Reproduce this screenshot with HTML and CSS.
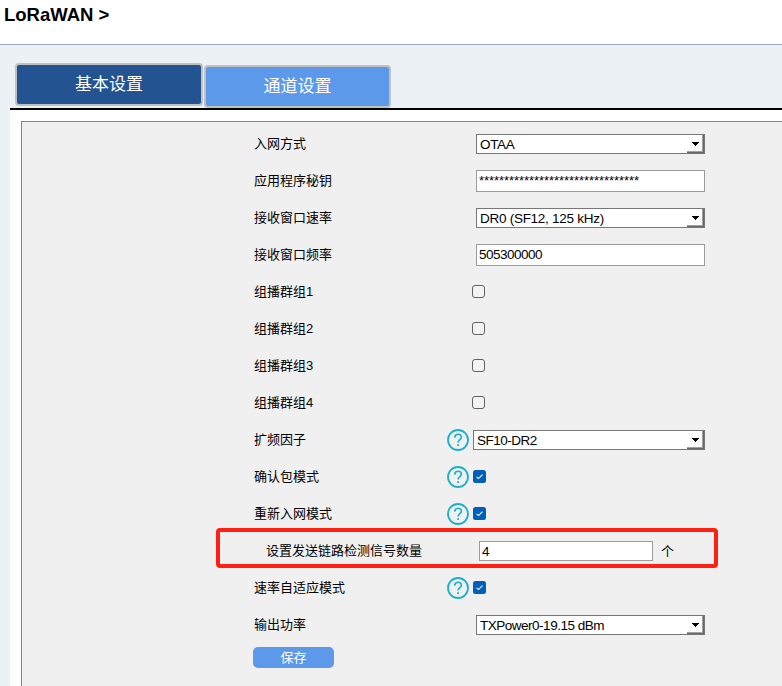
FILE: index.html
```html
<!DOCTYPE html>
<html lang="zh-CN">
<head>
<meta charset="utf-8">
<title>LoRaWAN</title>
<link rel="stylesheet" href="styles.css">
</head>
<body>
<svg class="defs" width="0" height="0">
  <symbol id="help" viewBox="0 0 22 22"><circle cx="11" cy="11" r="10" fill="none" stroke="#1db0cb" stroke-width="1.8"/><path d="M7.7 8.6C7.8 6.4 9.1 5.3 11.1 5.3S14.4 6.5 14.4 8.3C14.4 10.5 11.1 10.8 11.1 13.6" fill="none" stroke="#1db0cb" stroke-width="1.6"/><path d="M10.2 15.2h1.8v1.8h-1.8z" fill="#1db0cb"/></symbol>
  <symbol id="check" viewBox="0 0 13 13"><rect width="13" height="13" rx="2.5" fill="#005fb8"/><path d="M3.6 6.9l1.9 1.7 4-4" fill="none" stroke="#fff" stroke-width="1.1"/></symbol>
  <symbol id="arrow" viewBox="0 0 7 4"><path d="M0 0h7v1H6v1H5v1H4v1H3V3H2V2H1V1H0z" shape-rendering="crispEdges"/></symbol>
</svg>
<header class="header"><h1>LoRaWAN &gt;</h1></header>
<main class="page">
  <nav class="tabs">
    <a class="tab active">基本设置</a>
    <a class="tab">通道设置</a>
  </nav>
  <div class="content">
    <form class="panel">
      <div class="row"><label>入网方式</label><div class="field"><div class="select"><span>OTAA</span><i><svg><use href="#arrow"/></svg></i></div></div></div>
      <div class="row"><label>应用程序秘钥</label><div class="field"><input class="text stars" type="text" value="********************************"></div></div>
      <div class="row"><label>接收窗口速率</label><div class="field"><div class="select"><span class="rate">DR0 (SF12, 125 kHz)</span><i><svg><use href="#arrow"/></svg></i></div></div></div>
      <div class="row"><label>接收窗口频率</label><div class="field"><input class="text" type="text" value="505300000"></div></div>
      <div class="row"><label>组播群组1</label><div class="field"><input class="box" type="checkbox"></div></div>
      <div class="row"><label>组播群组2</label><div class="field"><input class="box" type="checkbox"></div></div>
      <div class="row"><label>组播群组3</label><div class="field"><input class="box" type="checkbox"></div></div>
      <div class="row"><label>组播群组4</label><div class="field"><input class="box" type="checkbox"></div></div>
      <div class="row"><label>扩频因子</label><div class="field helped"><svg class="help"><use href="#help"/></svg><div class="select"><span class="factor">SF10-DR2</span><i><svg><use href="#arrow"/></svg></i></div></div></div>
      <div class="row"><label>确认包模式</label><div class="field helped"><svg class="help"><use href="#help"/></svg><svg class="checked"><use href="#check"/></svg></div></div>
      <div class="row"><label>重新入网模式</label><div class="field helped"><svg class="help"><use href="#help"/></svg><svg class="checked"><use href="#check"/></svg></div></div>
      <div class="row highlight"><label>设置发送链路检测信号数量</label><div class="field"><input class="text" type="text" value="4"><span class="unit">个</span></div></div>
      <div class="row"><label>速率自适应模式</label><div class="field helped"><svg class="help"><use href="#help"/></svg><svg class="checked"><use href="#check"/></svg></div></div>
      <div class="row"><label>输出功率</label><div class="field"><div class="select"><span class="power">TXPower0-19.15 dBm</span><i><svg><use href="#arrow"/></svg></i></div></div></div>
      <button class="save" type="button">保存</button>
    </form>
  </div>
</main>
</body>
</html>
```
FILE: styles.css
```css
* { box-sizing: border-box; }
body {
  margin: 0;
  height: 686px;
  overflow: hidden;
  display: flex;
  flex-direction: column;
  background: #fff;
  color: #000;
  font: 13px "Liberation Sans", "Noto Sans CJK SC", sans-serif;
}
.defs { position: absolute; }
.header {
  flex: none;
  height: 45px;
  padding: 4px 4px 0;
  border-bottom: 1px solid #9aa9c4;
}
h1 { margin: 0; font-size: 18.5px; line-height: 22px; font-weight: bold; }
.page {
  flex: 1;
  display: flex;
  flex-direction: column;
  padding-left: 10px;
  background: #ecf1f6;
}
.tabs {
  display: flex;
  flex: none;
  gap: 1px;
  height: 65px;
  padding: 18px 0 0 5px;
  border-bottom: 2px solid #000;
}
.tab {
  width: 188px;
  height: 43px;
  margin-top: 2px;
  border: 2px solid #c0c0c0;
  border-radius: 4px;
  background: #5c99ea;
  color: #fff;
  font-size: 17px;
  line-height: 40px;
  text-align: center;
}
.tab.active { margin-top: 0; background: #235391; }
.tab + .tab { width: 187px; }
.content { flex: 1; padding: 11px 0 0 11px; background: #fff; }
.panel {
  height: 100%;
  padding-top: 4px;
  border: solid #83838b;
  border-width: 1px 0 0 1px;
  background: #f0f0f0;
}
.row { display: flex; align-items: center; height: 37px; padding-left: 232px; }
.row label { flex: none; width: 222px; margin-bottom: 1px; line-height: 20px; }
.field { display: flex; align-items: center; width: 229px; height: 100%; }
.helped { width: 258px; margin-left: -29px; gap: 4px; }
.text {
  width: 229px;
  height: 22px;
  margin-bottom: 2px;
  padding: 0 2px;
  border: 1px solid #9b9b9b;
  border-radius: 0;
  background: #fff;
  color: #000;
  font: inherit;
  font-size: 13.5px;
  letter-spacing: -0.5px;
}
.stars { padding-bottom: 1px; font-size: 13px; letter-spacing: -0.06px; }
.select {
  display: flex;
  flex: 1;
  justify-content: space-between;
  height: 20px;
  margin-bottom: 1px;
  padding-left: 3px;
  border: 1px solid #777;
  background: #fff;
  font-size: 13.5px;
  letter-spacing: -0.35px;
  line-height: 19px;
}
.select i {
  width: 17px;
  padding: 7px 0 0 5px;
  border: solid #696969;
  border-width: 0 1px 1px 0;
  box-shadow: inset -1px -1px #a0a0a0;
}
.select svg { display: block; width: 7px; height: 4px; }
.select .rate { letter-spacing: -0.27px; }
.select .power { letter-spacing: -0.49px; }
.select .factor { letter-spacing: -0.5px; }
.box {
  appearance: none;
  width: 13px;
  height: 13px;
  margin: 0 0 3px -4px;
  border: 1px solid #626262;
  border-radius: 3px;
  background: #f3f3f3;
}
.help { flex: none; width: 22px; height: 22px; margin-bottom: 1px; }
.checked { width: 13px; height: 13px; margin-bottom: 3px; }
.highlight {
  width: 502px;
  height: 40px;
  margin: -5px 0 2px 194px;
  padding-left: 46px;
  border: 4px solid #ff2011;
  border-radius: 4px;
}
.highlight label { width: 213px; margin: 6px 0 0; }
.highlight .text { width: 174px; height: 20px; margin: 6px 0 0; }
.unit { margin: 5px 0 0 8px; }
.save {
  display: block;
  width: 81px;
  height: 21px;
  margin: 3px 0 0 231px;
  padding: 0;
  border: 0;
  border-radius: 5px;
  background: #5c99ea;
  color: #fff;
  font: inherit;
  line-height: 21px;
}
```
